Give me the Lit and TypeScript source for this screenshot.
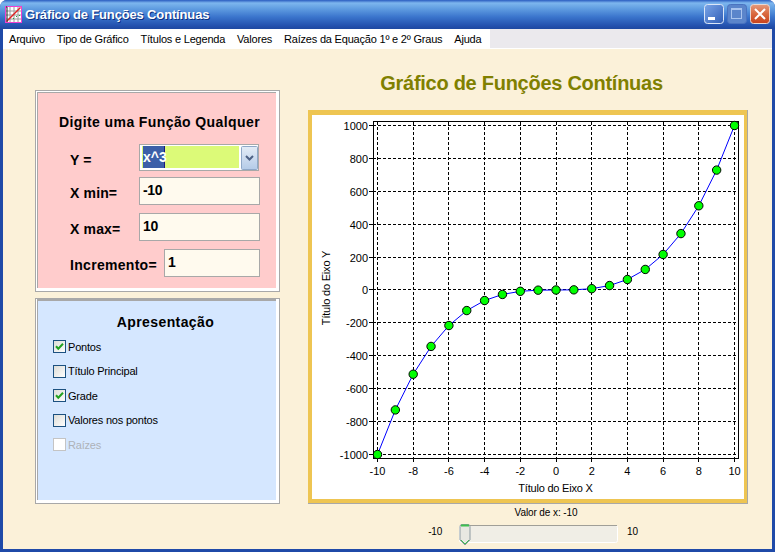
import { LitElement, html, css, svg } from "lit";
import { customElement } from "lit/decorators.js";

const gx = (x: number) => Math.round(377 + (x + 10) * 17.85) + 0.5;
const gy = (y: number) => Math.round(125 + ((1000 - y) / 2000) * 329 - 0.01) + 0.5;
const px = (x: number) => 377.5 + (x + 10) * 17.85;
const py = (y: number) => 125.5 + ((1000 - y) / 2000) * 329;
const pts = Array.from({ length: 21 }, (_, i) => i - 10);
const xTicks = [-10, -8, -6, -4, -2, 0, 2, 4, 6, 8, 10];
const yTicks = [1000, 800, 600, 400, 200, 0, -200, -400, -600, -800, -1000];

@customElement("app-root")
export class AppRoot extends LitElement {
  static styles = css`
    :host { display: block; width: 775px; height: 552px; overflow: hidden; font-family: "Liberation Sans", Arial, sans-serif; color: #000; }
    .window { box-sizing: border-box; width: 775px; height: 552px; background: #1f4aa8; border-radius: 7px 7px 0 0; padding: 0 3px 3px; display: flex; flex-direction: column; overflow: hidden; }
    .titlebar { height: 29px; flex: none; margin: 0 -3px; padding: 0 5px 0 5px; display: flex; align-items: center; background: linear-gradient(#2a5cc0 0, #7db6ee 3px, #5e9be0 9px, #3a74cc 17px, #2350ad 26px, #1e48a0 29px); }
    .appicon { width: 17px; height: 17px; flex: none; margin-top: -1px; }
    .title { margin-left: 3px; color: #fff; font-size: 13px; font-weight: 700; letter-spacing: -0.15px; text-shadow: 1px 1px 0 #0c2f80; flex: 1; white-space: nowrap; }
    .ctrls { display: flex; gap: 3px; margin-top: -1px; }
    .ctrl { width: 20px; height: 20px; display: block; }
    .menubar { height: 19px; flex: none; background: #ebe9ed; display: flex; }
    .menu { width: 487px; background: #fff; display: flex; align-items: center; padding-left: 6px; gap: 11.9px; box-sizing: border-box; font-size: 11px; letter-spacing: -0.2px; white-space: nowrap; }
    .sep { height: 1px; flex: none; background: #fff; }
    .body { flex: 1; background: #fbf1d9; padding-left: 32px; display: flex; gap: 28px; min-height: 0; }
    .left { width: 245px; flex: none; padding-top: 41px; display: flex; flex-direction: column; gap: 6px; }
    .panel { box-sizing: border-box; border: 1px solid #a8a8a8; background: #fff; padding: 1px 3px 3px 1px; }
    .panel.pink { height: 202px; }
    .panel.blue { height: 206px; padding-top: 0; }
    .inner { box-sizing: border-box; height: 100%; border-top: 1px solid #a8a8a8; border-left: 1px solid #a8a8a8; }
    .pink .inner { background: #ffcccc; padding: 21px 16px 0 32px; }
    .blue .inner { background: #d5e7ff; border-top-width: 2px; padding: 13px 0 0 15px; }
    h2 { margin: 0; font-size: 14px; line-height: 16px; font-weight: 700; white-space: nowrap; letter-spacing: 0.4px; }
    .pink h2 { margin-left: -11px; }
    .blue h2 { text-align: center; margin-left: 2px; }
    .row { display: flex; align-items: center; font-weight: 700; font-size: 14px; }
    .row .lbl { width: 69px; flex: none; white-space: nowrap; padding-top: 4px; letter-spacing: 0.15px; }
    .row .lbl.wide { width: 94px; letter-spacing: 0.3px; }
    .r0 { margin-top: 14px; }
    .combo { box-sizing: border-box; width: 120px; height: 27px; border: 1px solid #a8a8a8; background: #fff; padding: 1px 0 0 2px; display: flex; gap: 2px; }
    .combo .val { width: 97px; height: 22px; background: #dcfa78; padding-left: 1px; box-sizing: border-box; display: flex; }
    .sel { background: #3c5fa8; color: #fff; width: 22px; border-right: 1px solid #1a1a80; box-sizing: border-box; line-height: 22px; font-size: 14px; text-align: center; }
    .combo .btn { width: 17px; height: 24px; display: block; flex: none; }
    .input { box-sizing: border-box; height: 28px; border: 1px solid #a8a8a8; background: #fffaee; line-height: 24px; padding-left: 3px; font-size: 14px; font-weight: 700; flex: 1; letter-spacing: -0.3px; }
    .r1 { margin-top: 6px; }
    .r2 { margin-top: 8px; }
    .checks { margin-top: 4.7px; display: flex; flex-direction: column; }
    .check { height: 24.5px; display: flex; align-items: center; font-size: 11px; gap: 2px; letter-spacing: -0.2px; }
    .check svg { width: 13px; height: 13px; display: block; flex: none; }
    .check.off { color: #aeb2b8; }
    .right { width: 440px; flex: none; display: flex; flex-direction: column; }
    .heading { height: 61px; flex: none; display: flex; align-items: center; justify-content: center; font-size: 20px; font-weight: 700; color: #808000; padding-top: 7px; padding-right: 13px; box-sizing: border-box; letter-spacing: -0.27px; white-space: nowrap; }
    .frame { flex: none; width: 440px; height: 394px; display: block; }
    .vlabel { text-align: center; font-size: 10px; height: 20px; line-height: 18px; padding-left: 36px; letter-spacing: -0.1px; }
    .slider { height: 22px; display: flex; align-items: flex-start; font-size: 10px; line-height: 16px; }
    .slider .min { width: 134px; text-align: right; flex: none; letter-spacing: -0.2px; }
    .slider .track { margin-left: 17px; width: 160px; height: 22px; flex: none; display: block; }
    .slider .max { margin-left: 8px; }
    .chart-text { font-family: "Liberation Sans", Arial, sans-serif; font-size: 11px; fill: #000; }
    .axis-title { letter-spacing: -0.2px; }
  `;

  private chart() {
    return svg`
      <svg class="frame" viewBox="308 110 440 394" xmlns="http://www.w3.org/2000/svg">
        <rect x="308" y="110" width="440" height="394" fill="#eec552"/>
        <rect x="747" y="110" width="1" height="394" fill="#a8a8a8"/>
        <rect x="308" y="503" width="440" height="1" fill="#a8a8a8"/>
        <rect x="312" y="115" width="432" height="384" fill="#fff"/>
        <g stroke="#000" stroke-width="1" stroke-dasharray="3 2" shape-rendering="crispEdges">
          ${xTicks.map((x) => svg`<line x1=${gx(x)} x2=${gx(x)} y1="122" y2="458"/>`)}
          ${yTicks.map((y) => svg`<line x1="373" x2="738" y1=${gy(y)} y2=${gy(y)}/>`)}
        </g>
        <rect x="373.5" y="121.5" width="365" height="337" fill="none" stroke="#000" shape-rendering="crispEdges"/>
        <g stroke="#000" shape-rendering="crispEdges">
          ${yTicks.map((y) => svg`<line x1="369" x2="373" y1=${gy(y)} y2=${gy(y)}/>`)}
          ${xTicks.map((x) => svg`<line y1="459" y2="462" x1=${gx(x)} x2=${gx(x)}/>`)}
        </g>
        <polyline fill="none" stroke="#0000ff" stroke-width="1" points=${pts.map((x) => `${px(x)},${py(x * x * x)}`).join(" ")}/>
        ${pts.map((x) => svg`<circle cx=${px(x)} cy=${py(x * x * x)} r="4.2" fill="#00ff00" stroke="#000" stroke-width="1"/>`)}
        ${yTicks.map((y) => svg`<text class="chart-text" x="368" y=${gy(y) + 4} text-anchor="end">${y}</text>`)}
        ${xTicks.map((x) => svg`<text class="chart-text" x=${px(x)} y="474.5" text-anchor="middle">${x}</text>`)}
        <text class="chart-text axis-title" x="555.5" y="492" text-anchor="middle">Título do Eixo X</text>
        <text class="chart-text axis-title" transform="translate(330 288) rotate(-90)" text-anchor="middle">Título do Eixo Y</text>
      </svg>`;
  }

  private checkbox(state: "on" | "off" | "disabled") {
    const stroke = state === "disabled" ? "#c4c4c4" : "#1c5180";
    return html`<svg viewBox="0 0 13 13">
      <defs><linearGradient id="cb" x1="0" y1="0" x2="1" y2="1"><stop offset="0" stop-color="#dcdcd6"/><stop offset="1" stop-color="#fff"/></linearGradient></defs>
      <rect x="0.5" y="0.5" width="12" height="12" fill=${state === "disabled" ? "#fff" : "url(#cb)"} stroke=${stroke}/>
      ${state === "on" ? svg`<path d="M3 6.2 L5.3 8.7 L10 3.8" fill="none" stroke="#21a121" stroke-width="2"/>` : ""}
    </svg>`;
  }

  render() {
    return html`
      <div class="window">
        <div class="titlebar">
          <svg class="appicon" viewBox="0 0 17 17">
            <rect x="0.5" y="0.5" width="16" height="16" fill="#fff" stroke="#f040d0"/>
            <path d="M5 1v15M9 1v15M13 1v15M1 5h15M1 9h15M1 13h15" stroke="#9a9a9a" stroke-width="1"/>
            <path d="M1.5 15.5 L15.5 1.5" stroke="#e02020" stroke-width="1.4"/>
            <path d="M8 13l1-1M11 11l1-1M14 10l1-1" stroke="#20a040" stroke-width="1"/>
            <path d="M1 1h1v15" stroke="#222" fill="none"/>
          </svg>
          <div class="title">Gráfico de Funções Contínuas</div>
          <div class="ctrls">
            <svg class="ctrl" viewBox="0 0 20 20">
              <defs><linearGradient id="wb" x1="0" y1="0" x2="1" y2="1"><stop offset="0" stop-color="#7ba6e8"/><stop offset="1" stop-color="#2f5cb5"/></linearGradient></defs>
              <rect x="0.5" y="0.5" width="19" height="19" rx="3" fill="url(#wb)" stroke="#dbe6f7"/>
              <rect x="4" y="13" width="7" height="3" fill="#fff"/>
            </svg>
            <svg class="ctrl" viewBox="0 0 20 20">
              <rect x="0.5" y="0.5" width="19" height="19" rx="3" fill="#5b85cb" stroke="#4a73c0"/>
              <rect x="4.5" y="4.5" width="10" height="10" fill="none" stroke="#a9c4ee"/>
              <rect x="4" y="4" width="11" height="2" fill="#a9c4ee"/>
            </svg>
            <svg class="ctrl" viewBox="0 0 20 20">
              <defs><linearGradient id="cl" x1="0" y1="0" x2="0" y2="1"><stop offset="0" stop-color="#e59a7c"/><stop offset="0.5" stop-color="#d9683e"/><stop offset="1" stop-color="#c8421c"/></linearGradient></defs>
              <rect x="0.5" y="0.5" width="19" height="19" rx="3" fill="url(#cl)" stroke="#e8d8d2"/>
              <path d="M5 5 L15 15 M15 5 L5 15" stroke="#fff" stroke-width="2"/>
            </svg>
          </div>
        </div>
        <div class="menubar">
          <div class="menu">
            <span>Arquivo</span><span>Tipo de Gráfico</span><span>Títulos e Legenda</span><span>Valores</span><span>Raízes da Equação 1º e 2º Graus</span><span>Ajuda</span>
          </div>
        </div>
        <div class="sep"></div>
        <div class="body">
          <div class="left">
            <div class="panel pink">
              <div class="inner">
                <h2>Digite uma Função Qualquer</h2>
                <div class="row r0">
                  <span class="lbl">Y =</span>
                  <div class="combo">
                    <div class="val"><span class="sel">x^3</span></div>
                    <svg class="btn" viewBox="0 0 17 24">
                      <defs><linearGradient id="cbtn" x1="0" y1="0" x2="0" y2="1"><stop offset="0" stop-color="#e4ecf6"/><stop offset="1" stop-color="#b4cbe8"/></linearGradient></defs>
                      <rect x="0.5" y="0.5" width="16" height="23" rx="1" fill="url(#cbtn)" stroke="#8fa8c8"/>
                      <path d="M5 10 L8.5 13.5 L12 10" fill="none" stroke="#4d6185" stroke-width="2"/>
                    </svg>
                  </div>
                </div>
                <div class="row r1"><span class="lbl">X min=</span><div class="input">-10</div></div>
                <div class="row r2"><span class="lbl">X max=</span><div class="input">10</div></div>
                <div class="row r2"><span class="lbl wide">Incremento=</span><div class="input">1</div></div>
              </div>
            </div>
            <div class="panel blue">
              <div class="inner">
                <h2>Apresentação</h2>
                <div class="checks">
                  <div class="check">${this.checkbox("on")}<span>Pontos</span></div>
                  <div class="check">${this.checkbox("off")}<span>Título Principal</span></div>
                  <div class="check">${this.checkbox("on")}<span>Grade</span></div>
                  <div class="check">${this.checkbox("off")}<span>Valores nos pontos</span></div>
                  <div class="check off">${this.checkbox("disabled")}<span>Raízes</span></div>
                </div>
              </div>
            </div>
          </div>
          <div class="right">
            <div class="heading">Gráfico de Funções Contínuas</div>
            ${this.chart()}
            <div class="vlabel">Valor de x: -10</div>
            <div class="slider">
              <span class="min">-10</span>
              <svg class="track" viewBox="0 0 160 22">
                <rect x="0.5" y="1.5" width="158" height="17" rx="2" fill="#f0eee6" stroke="#fff"/>
                <path d="M1 1.5 H158" stroke="#a09f98"/>
                <path d="M1 2.5 Q1 0.5 3 0.5 H9 Q11 0.5 11 2.5 V16 L6 21 L1 16 Z" fill="#e8e8e2" stroke="#8d9aa0"/>
                <path d="M2 1.5 H10" stroke="#3fc04f" stroke-width="2"/>
                <path d="M2 16 L6 20 L10 16" fill="none" stroke="#3fc04f"/>
              </svg>
              <span class="max">10</span>
            </div>
          </div>
        </div>
      </div>
    `;
  }
}
